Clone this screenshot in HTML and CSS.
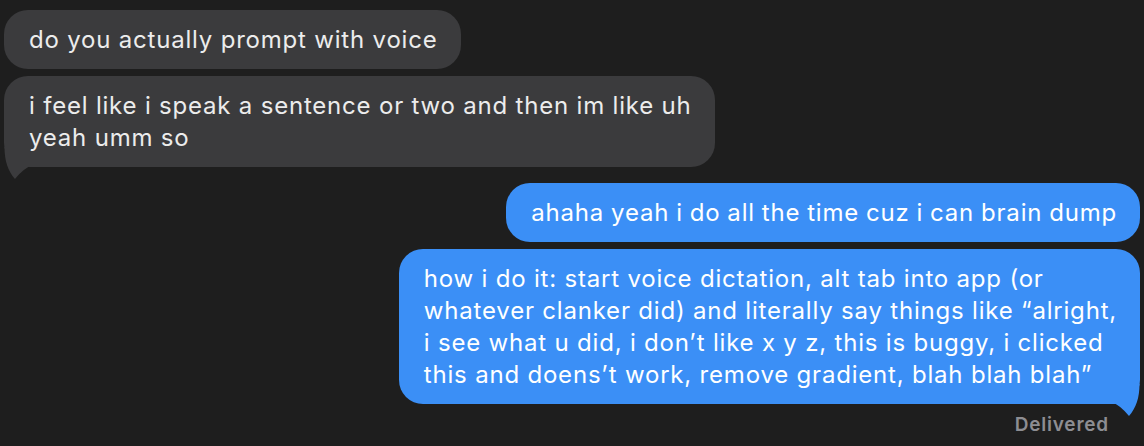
FILE: index.html
```html
<!DOCTYPE html>
<html lang="en">
<head>
<meta charset="utf-8">
<title>Messages</title>
<link rel="stylesheet" href="styles.css">
</head>
<body>
<main class="thread">
  <div class="bubble received">do you actually prompt with voice</div>
  <div class="bubble received has-tail">i feel like i speak a sentence or two and then im like uh<br>yeah umm so<svg class="tail tail-left" viewBox="0 0 28 34" aria-hidden="true"><path d="M27.5 1 C27.5 15 24 25 17 33 C13 28 9 24 2 20 L2 1 Z"/></svg></div>
  <div class="bubble sent gap-top">ahaha yeah i do all the time cuz i can brain dump</div>
  <div class="bubble sent has-tail">how i do it: start voice dictation, alt tab into app (or<br>whatever clanker did) and literally say things like “alright,<br>i see what u did, i don’t like x y z, this is buggy, i clicked<br>this and doens’t work, remove gradient, blah blah blah”<svg class="tail tail-right" viewBox="0 0 28 34" aria-hidden="true"><path d="M27.5 1 C27.5 15 24 25 17 33 C13 28 9 24 2 20 L2 1 Z"/></svg></div>
  <div class="status">Delivered</div>
</main>
</body>
</html>
```

FILE: styles.css
```css
html, body {
  margin: 0;
  padding: 0;
  background: #1e1e1e;
}

body {
  width: 1144px;
  height: 446px;
  overflow: hidden;
  font-family: "Inter", "Liberation Sans", sans-serif;
}

.thread {
  display: flex;
  flex-direction: column;
  gap: 7px;
  padding: 10px 4px 0 4px;
}

.bubble {
  position: relative;
  font-size: 24px;
  letter-spacing: 0.8px;
  line-height: 32px;
  padding: 13.5px 23px 13.5px 25px;
  border-radius: 24px;
  white-space: nowrap;
}

.received {
  align-self: flex-start;
  background: #3b3b3d;
  color: #ececec;
}

.sent {
  align-self: flex-end;
  background: #3b8ff6;
  color: #ffffff;
}

.gap-top {
  margin-top: 9px;
  word-spacing: -0.6px;
}

.tail {
  position: absolute;
  bottom: -13px;
  width: 28px;
  height: 34px;
}

.tail-right {
  right: 0;
  fill: #3b8ff6;
}

.tail-left {
  left: 0;
  fill: #3b3b3d;
  transform: scaleX(-1);
}

.status {
  align-self: flex-end;
  margin-top: 3px;
  margin-right: 31px;
  font-size: 19px;
  letter-spacing: 0.8px;
  line-height: 22px;
  font-weight: 600;
  color: #8d8d92;
}
```
